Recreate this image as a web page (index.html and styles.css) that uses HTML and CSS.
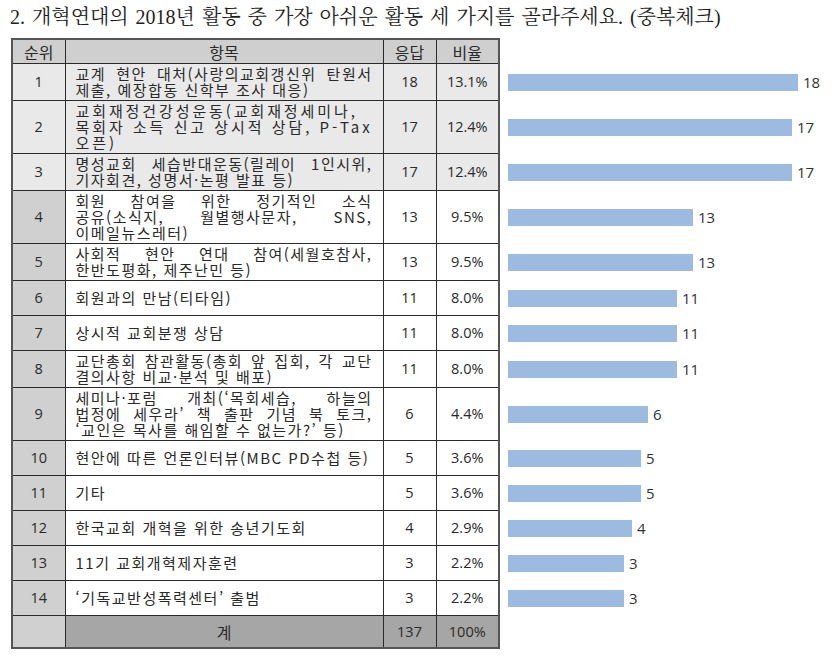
FILE: index.html
```html
<!DOCTYPE html>
<html lang="ko">
<head>
<meta charset="utf-8">
<title>개혁연대 2018년 활동 설문</title>
<link rel="stylesheet" href="styles.css">
</head>
<body>
<div class="page">
  <h1 class="title">2. 개혁연대의 2018년 활동 중 가장 아쉬운 활동 세 가지를 골라주세요. (중복체크)</h1>
  <table class="survey">
    <colgroup>
      <col class="c-rank"><col class="c-item"><col class="c-count"><col class="c-pct"><col class="c-chart">
    </colgroup>
    <thead>
      <tr><th>순위</th><th>항목</th><th>응답</th><th>비율</th><th class="chart"></th></tr>
    </thead>
    <tbody>
      <tr class="top">
        <td class="rank">1</td><td class="item">교계 현안 대처(사랑의교회갱신위 탄원서 제출, 예장합동 신학부 조사 대응)</td><td class="num">18</td><td class="num">13.1%</td>
        <td class="chart"><div class="bar-wrap"><span class="bar" style="width:290px"></span><span class="bar-label">18</span></div></td>
      </tr>
      <tr class="top">
        <td class="rank">2</td><td class="item wide">교회재정건강성운동(교회재정세미나, 목회자 소득 신고 상시적 상담, P-Tax 오픈)</td><td class="num">17</td><td class="num">12.4%</td>
        <td class="chart"><div class="bar-wrap"><span class="bar" style="width:284px"></span><span class="bar-label">17</span></div></td>
      </tr>
      <tr class="top">
        <td class="rank">3</td><td class="item">명성교회 세습반대운동(릴레이 1인시위, 기자회견, 성명서·논평 발표 등)</td><td class="num">17</td><td class="num">12.4%</td>
        <td class="chart"><div class="bar-wrap"><span class="bar" style="width:284px"></span><span class="bar-label">17</span></div></td>
      </tr>
      <tr>
        <td class="rank">4</td><td class="item">회원 참여을 위한 정기적인 소식 공유&#8288;(&#8288;소식지, 월별행사문자, SNS, 이메일뉴스레터)</td><td class="num">13</td><td class="num">9.5%</td>
        <td class="chart"><div class="bar-wrap"><span class="bar" style="width:185px"></span><span class="bar-label">13</span></div></td>
      </tr>
      <tr>
        <td class="rank">5</td><td class="item">사회적 현안 연대 참여(세월호참사, 한반도평화, 제주난민 등)</td><td class="num">13</td><td class="num">9.5%</td>
        <td class="chart"><div class="bar-wrap"><span class="bar" style="width:185px"></span><span class="bar-label">13</span></div></td>
      </tr>
      <tr>
        <td class="rank">6</td><td class="item">회원과의 만남(티타임)</td><td class="num">11</td><td class="num">8.0%</td>
        <td class="chart"><div class="bar-wrap"><span class="bar" style="width:169px"></span><span class="bar-label">11</span></div></td>
      </tr>
      <tr>
        <td class="rank">7</td><td class="item">상시적 교회분쟁 상담</td><td class="num">11</td><td class="num">8.0%</td>
        <td class="chart"><div class="bar-wrap"><span class="bar" style="width:169px"></span><span class="bar-label">11</span></div></td>
      </tr>
      <tr>
        <td class="rank">8</td><td class="item">교단총회 참관활동(총회 앞 집회, 각 교단 결의사항 비교·분석 및 배포)</td><td class="num">11</td><td class="num">8.0%</td>
        <td class="chart"><div class="bar-wrap"><span class="bar" style="width:169px"></span><span class="bar-label">11</span></div></td>
      </tr>
      <tr>
        <td class="rank">9</td><td class="item">세미나·포럼 개최(‘목회세습, 하늘의 법정에&nbsp;세우라’ 책 출판 기념 북 토크, ‘교인은 목사를 해임할 수 없는가?’ 등)</td><td class="num">6</td><td class="num">4.4%</td>
        <td class="chart"><div class="bar-wrap"><span class="bar" style="width:140px"></span><span class="bar-label">6</span></div></td>
      </tr>
      <tr>
        <td class="rank">10</td><td class="item">현안에 따른 언론인터뷰(MBC PD수첩 등)</td><td class="num">5</td><td class="num">3.6%</td>
        <td class="chart"><div class="bar-wrap"><span class="bar" style="width:133px"></span><span class="bar-label">5</span></div></td>
      </tr>
      <tr>
        <td class="rank">11</td><td class="item">기타</td><td class="num">5</td><td class="num">3.6%</td>
        <td class="chart"><div class="bar-wrap"><span class="bar" style="width:133px"></span><span class="bar-label">5</span></div></td>
      </tr>
      <tr>
        <td class="rank">12</td><td class="item">한국교회 개혁을 위한 송년기도회</td><td class="num">4</td><td class="num">2.9%</td>
        <td class="chart"><div class="bar-wrap"><span class="bar" style="width:124px"></span><span class="bar-label">4</span></div></td>
      </tr>
      <tr>
        <td class="rank">13</td><td class="item">11기 교회개혁제자훈련</td><td class="num">3</td><td class="num">2.2%</td>
        <td class="chart"><div class="bar-wrap"><span class="bar" style="width:116px"></span><span class="bar-label">3</span></div></td>
      </tr>
      <tr>
        <td class="rank">14</td><td class="item">‘기독교반성폭력센터’ 출범</td><td class="num">3</td><td class="num">2.2%</td>
        <td class="chart"><div class="bar-wrap"><span class="bar" style="width:116px"></span><span class="bar-label">3</span></div></td>
      </tr>
    </tbody>
    <tfoot>
      <tr><td class="rank"></td><td class="total-label">계</td><td class="num">137</td><td class="num">100%</td><td class="chart"></td></tr>
    </tfoot>
  </table>
</div>
</body>
</html>
```

FILE: styles.css
```css
html, body {
  margin: 0;
  padding: 0;
  background: #ffffff;
}

.page {
  padding: 4px 0 0 11px;
  color: #2a2a2a;
  font-family: "Open Sans", "Noto Sans CJK KR", sans-serif;
}

.title {
  margin: 0 0 8px -1px;
  font-family: "Liberation Serif", "Noto Serif CJK KR", "Noto Sans CJK KR", serif;
  font-weight: normal;
  font-size: 20px;
  line-height: 26px;
  letter-spacing: 0;
  word-spacing: 2px;
  color: #1e1e1e;
  white-space: nowrap;
}

.survey {
  border-collapse: collapse;
  table-layout: fixed;
  width: 824px;
  font-size: 14.5px;
}

.c-rank { width: 53px; }
.c-item { width: 318px; }
.c-count { width: 53px; }
.c-pct { width: 63px; }
.c-chart { width: 337px; }

.survey th,
.survey td {
  border: 1px solid #2b2b2b;
  padding: 2px 10px;
  line-height: 16px;
  text-align: center;
  vertical-align: middle;
  font-weight: normal;
}

.survey thead th {
  height: 21px;
  padding-top: 1px;
  padding-bottom: 1px;
  background: #cfcfcf;
  border-top: 2px solid #555;
  font-family: "Noto Sans CJK KR", sans-serif;
  font-size: 16px;
}

.survey thead th:first-child,
.survey tbody td:first-child,
.survey tfoot td:first-child {
  border-left: 2px solid #555;
}

.survey thead th:nth-child(4),
.survey tbody td:nth-child(4),
.survey tfoot td:nth-child(4) {
  border-right: 2px solid #555;
}

.survey tbody tr {
  height: 35px;
}

.survey tbody tr.top td {
  background: #e9e9e9;
}

.survey tbody tr.top td.chart {
  background: transparent;
}

.survey td.rank {
  background: #d0d0d0;
}

.survey td.item {
  text-align: justify;
  text-align-last: left;
  word-break: keep-all;
  font-family: "Noto Sans CJK KR", sans-serif;
  font-size: 15px;
  letter-spacing: 1.5px;
  line-height: 16px;
  padding: 2px 10px;
}

.survey td.item.wide {
  letter-spacing: 2.9px;
}

.survey tfoot td {
  height: 27px;
  background: #a6a6a6;
  border-bottom: 2px solid #555;
}

.survey tfoot td.total-label {
  font-family: "Noto Sans CJK KR", sans-serif;
  font-size: 16px;
}

.survey th.chart,
.survey td.chart,
.survey tfoot td.chart {
  border: none;
  background: transparent;
  padding: 0 0 0 8px;
  text-align: left;
}

.bar-wrap {
  display: flex;
  align-items: center;
  gap: 5px;
}

.bar {
  display: block;
  height: 17px;
  background: #9dbbe0;
}

.bar-label {
  font-size: 15px;
  color: #333;
}
```
